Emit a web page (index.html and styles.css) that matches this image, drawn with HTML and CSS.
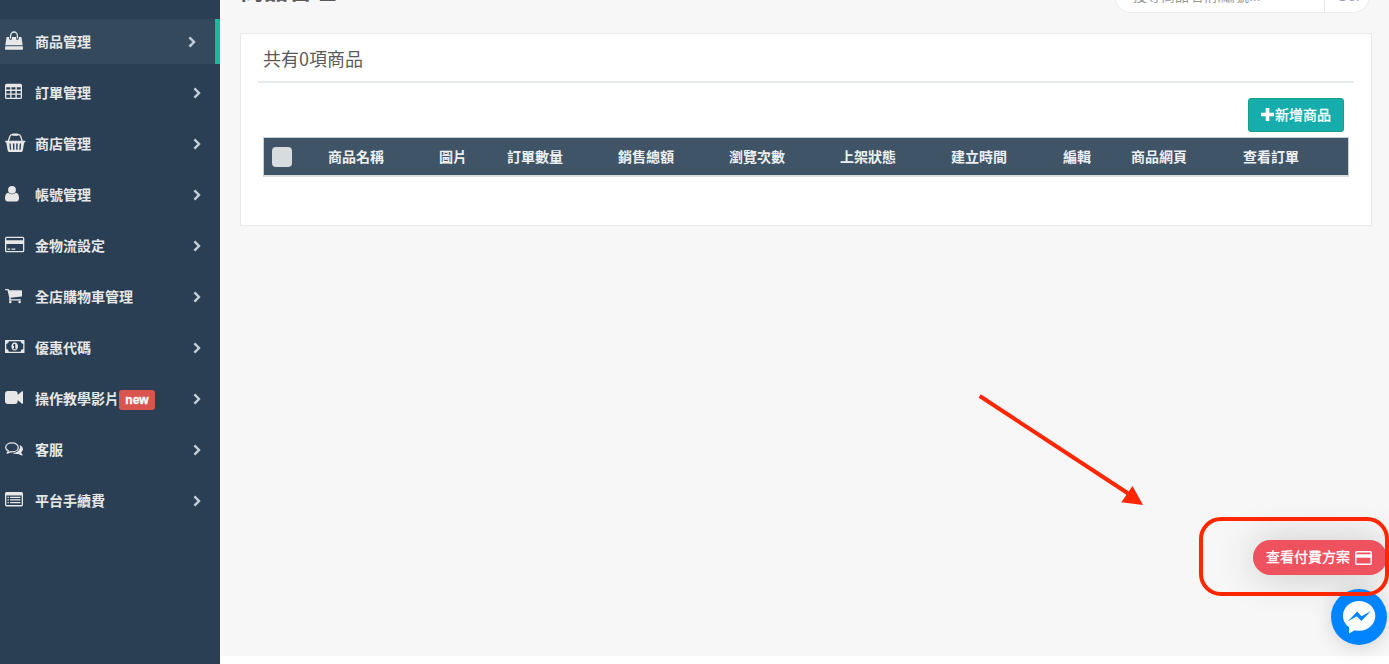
FILE: index.html
```html
<!DOCTYPE html>
<html lang="zh-Hant">
<head>
    <meta charset="UTF-8">
    <meta name="viewport" content="width=device-width, initial-scale=1.0">
    <title>商品管理</title>
    <link rel="stylesheet" href="styles.css">
</head>
<body>

    <svg class="defs" width="0" height="0">
        <symbol id="chevron" viewBox="0 0 8 12">
            <path d="M1.4 1.3 L6 6 L1.4 10.7" fill="none" stroke="#c4cfda" stroke-width="2.4"/>
        </symbol>
    </svg>

    <div class="container">
        <nav class="sidebar">
            <ul class="side-menu">
                <li class="active">
                    <svg class="icon" viewBox="0 0 20 20"><path d="M5.600 8.500V5.700a3.400 3.700 0 0 1 6.800 0V8.500" fill="none" stroke="#e7e7e7" stroke-width="1.300"/><path d="M1.600 7H4.200v1.500a1.400 1.400 0 0 0 2.800 0V7h4v1.500a1.400 1.400 0 0 0 2.800 0V7h2.600L17.700 15.200H.3zM.2 16.200h17.600l.2 2.800q0 .8-.8.800H.8Q0 19.800 0 19z"/></svg>
                    <span class="text">商品管理</span>
                    <svg class="chevron"><use href="#chevron"/></svg>
                </li>
                <li>
                    <svg class="icon" viewBox="0 0 20 20"><path fill-rule="evenodd" d="M1.5 2.700h14q1.500 0 1.500 1.500v12.300q0 1.500-1.500 1.500h-14Q0 18 0 16.500V4.200Q0 2.700 1.500 2.700zM1.300 6.300v2.300h3.900V6.300zm5.200 0v2.300h3.900V6.300zm5.300 0v2.300h3.900V6.300zM1.300 9.900v2.500h3.900V9.900zm5.200 0v2.500h3.900V9.900zm5.300 0v2.500h3.900V9.900zM1.300 13.700v3h3.900v-3zm5.200 0v3h3.900v-3zm5.300 0v3h3.900v-3z"/></svg>
                    <span class="text">訂單管理</span>
                    <svg class="chevron"><use href="#chevron"/></svg>
                </li>
                <li>
                    <svg class="icon icon-wide" viewBox="0 0 21 20"><path d="M3.300 9L5 4Q5.400 2.700 7 2.700h6.500q1.600 0 2 1.300L17.200 9" fill="none" stroke="#e7e7e7" stroke-width="1.300"/><path d="M8 1.400h4.500q.8 0 .8 1v.6q0 .8-.8.800H8q-.8 0-.8-.8v-.6q0-1 .8-1z"/><path fill-rule="evenodd" d="M1 8.700h18.500q1 0 1 .9t-1 .9h-.3L17.800 18.600q-.2 1.300-1.400 1.300H4.100q-1.200 0-1.400-1.300L1.300 10.500H1q-1 0-1-.9t1-.9zM4.400 11.500l.5 6.300h1.300l-.5-6.300zm3.500 0l.2 6.300h1.300v-6.300zm3.300 0v6.300h1.300l.2-6.300zm3.600 0l-.5 6.300h1.300l.5-6.300z"/></svg>
                    <span class="text">商店管理</span>
                    <svg class="chevron"><use href="#chevron"/></svg>
                </li>
                <li>
                    <svg class="icon" viewBox="0 0 20 20"><circle cx="7" cy="6.800" r="3.900"/><path d="M3.300 9.700q1.600 1.600 3.700 1.600t3.700-1.600q3.300.2 3.300 5.600 0 3.100-2.700 3.100H2.700Q0 18.400 0 15.300 0 9.900 3.300 9.700z"/></svg>
                    <span class="text">帳號管理</span>
                    <svg class="chevron"><use href="#chevron"/></svg>
                </li>
                <li>
                    <svg class="icon" viewBox="0 0 20 20"><path fill-rule="evenodd" d="M1.600 2.700h16.100q1.600 0 1.600 1.600v12.400q0 1.600-1.600 1.600H1.600Q0 18.300 0 16.700V4.300Q0 2.700 1.600 2.700zM1.300 4v2.300H18V4zm0 6v7H18v-7zM2.600 14.500h2.500v1.300H2.600zm3.900 0h3.800v1.300H6.500z"/></svg>
                    <span class="text">金物流設定</span>
                    <svg class="chevron"><use href="#chevron"/></svg>
                </li>
                <li>
                    <svg class="icon" viewBox="0 0 20 20"><path d="M.6 4h2.700q.6 0 .8 1.200h12.200q.7 0 .7.700v5q0 .6-.6.700l-10.700 1.200.1 1.400h9.500q.7 0 .7.600t-.7.700H4.700q-.8 0-.8-.7l.5-1.400L2.600 5.300h-2Q0 5.300 0 4.600T.6 4z"/><circle cx="5.300" cy="16.900" r="1.300"/><circle cx="14.600" cy="16.900" r="1.300"/></svg>
                    <span class="text">全店購物車管理</span>
                    <svg class="chevron"><use href="#chevron"/></svg>
                </li>
                <li>
                    <svg class="icon" viewBox="0 0 20 20"><path fill-rule="evenodd" d="M.6 4h18.300q.6 0 .6.600v11.800q0 .6-.6.600H.6Q0 17 0 16.400V4.600Q0 4 .6 4zM3.900 5.300Q3.700 7.700 1.300 7.900v5.200q2.400.2 2.600 2.600h11.700q.2-2.400 2.600-2.600V7.900q-2.400-.2-2.600-2.600z"/><path fill-rule="evenodd" d="M9.700 6.400c2.200 0 3.300 1.900 3.300 4.100s-1.100 4.100-3.300 4.100-3.300-1.900-3.300-4.100 1.100-4.100 3.300-4.100zM9.300 7.900l-1.500 1.200.6.800.6-.4v2.900H8v.9h3.300v-.9h-1V7.900z"/></svg>
                    <span class="text">優惠代碼</span>
                    <svg class="chevron"><use href="#chevron"/></svg>
                </li>
                <li>
                    <svg class="icon" viewBox="0 0 20 20"><path d="M2.900 4h6.900q2.900 0 2.900 2.900v1.200l3.900-3.700q.4-.4.900-.2t.5.600v11.400q0 .4-.5.600t-.9-.2l-3.900-3.700v1.200q0 2.900-2.900 2.900H2.900Q0 17 0 14.100V6.900Q0 4 2.900 4z"/></svg>
                    <span class="text">操作教學影片<span class="label">new</span></span>
                    <svg class="chevron"><use href="#chevron"/></svg>
                </li>
                <li>
                    <svg class="icon" viewBox="0 0 20 20"><path fill="none" stroke="#e7e7e7" stroke-width="1.300" stroke-linejoin="round" d="M7 4.900c3.700 0 6.300 2 6.300 4.500s-2.600 4.500-6.300 4.500q-.9 0-1.700-.2-1.500 1.200-3.200 1.400 1-1 1.200-2.300C1.700 12 .7 10.800.7 9.400c0-2.500 2.600-4.500 6.300-4.500z"/><path d="M14.900 7q3.100 1.500 3.100 4 0 2-1.900 3.300.4 1.400 1.500 2.500.3.500-.3.600-2.100-.2-3.700-1.500-3.700.5-6.300-.9 4 0 6.200-2.300Q15.800 10.200 14.900 7z"/></svg>
                    <span class="text">客服</span>
                    <svg class="chevron"><use href="#chevron"/></svg>
                </li>
                <li>
                    <svg class="icon" viewBox="0 0 20 20"><path fill-rule="evenodd" d="M1.600 3h14.800Q18 3 18 4.600v11.200q0 1.600-1.600 1.600H1.600Q0 17.400 0 15.800V4.600Q0 3 1.600 3zM1.300 6.600v9.500h15.400V6.600z"/><path d="M2.500 7.700h1.400V9H2.500zm2.600 0h10.300V9H5.100zm-2.600 2.600h1.400v1.300H2.500zm2.600 0h10.300v1.300H5.100zm-2.600 2.600h1.400v1.300H2.500zm2.600 0h10.300v1.300H5.100z"/></svg>
                    <span class="text">平台手續費</span>
                    <svg class="chevron"><use href="#chevron"/></svg>
                </li>
            </ul>
        </nav>

        <main class="content">
            <header class="page-title">
                <h3>商品管理</h3>
                <div class="search">
                    <span class="search-input">搜尋商品名稱,編號...</span>
                    <span class="search-button">Go!</span>
                </div>
            </header>

            <section class="panel">
                <h2 class="panel-title">共有0項商品</h2>
                <div class="toolbar">
                    <button class="add-button" type="button"><svg viewBox="0 0 13 13"><path d="M4.700 0h3.600v4.700H13v3.600H8.300V13H4.700V8.300H0V4.700h4.700z" fill="#fff"/></svg><span>新增商品</span></button>
                </div>
                <table class="products">
                    <colgroup>
                        <col class="col-check">
                        <col class="col-name">
                        <col class="col-image">
                        <col class="col-text">
                        <col class="col-text">
                        <col class="col-text">
                        <col class="col-text">
                        <col class="col-time">
                        <col class="col-edit">
                        <col class="col-page">
                        <col>
                    </colgroup>
                    <thead>
                        <tr>
                            <th><span class="checkbox"></span></th>
                            <th>商品名稱</th>
                            <th>圖片</th>
                            <th>訂單數量</th>
                            <th>銷售總額</th>
                            <th>瀏覽次數</th>
                            <th>上架狀態</th>
                            <th>建立時間</th>
                            <th>編輯</th>
                            <th>商品網頁</th>
                            <th>查看訂單</th>
                        </tr>
                    </thead>
                </table>
            </section>
        </main>
    </div>

    <!-- floating buttons -->
    <a class="plan-button"><span>查看付費方案</span><svg viewBox="0 0 17 14"><rect x=".75" y=".75" width="15.500" height="12.500" rx="1" fill="none" stroke="#fff" stroke-width="1.500"/><path d="M1 3.300h15v3.400H1z" fill="#fff"/></svg></a>
    <a class="messenger">
        <svg viewBox="0 0 56 56">
            <path fill="#fff" d="M28 12c9 0 16.300 6.600 16.300 14.900S37 41.800 28 41.800q-2.100 0-4.200-.6L18.100 44.600V38.200C14.400 35.500 12 31.500 12 26.900 12 18.600 19.100 12 28 12z"/>
            <path fill="#0084ff" d="M16.700 32.600l9.500-10 4.300 4.700 9.500-5.300-9.700 10-4.500-4.800z"/>
        </svg>
    </a>

    <!-- arrow and frame pointing at the plan button -->
    <svg class="arrow" viewBox="0 0 170 116">
        <path d="M4.700 6 L154 104" stroke="#ff2600" stroke-width="4" fill="none"/>
        <path d="M168 115 L157.500 96 L146.300 112.300z" fill="#ff2600"/>
    </svg>
    <div class="frame"></div>

</body>
</html>
```
FILE: styles.css
```css
* {
    box-sizing: border-box;
}

body {
    margin: 0;
    height: 664px;
    overflow: hidden;
    position: relative;
    background-color: #fff;
    color: #5a5a5a;
    font-family: "Liberation Sans", "Noto Sans CJK TC", sans-serif;
    font-size: 14px;
}

.defs {
    position: absolute;
}

.container {
    display: flex;
    align-items: flex-start;
}

/* sidebar */
.sidebar {
    width: 220px;
    height: 664px;
    background-color: #2a3f54;
}

.side-menu {
    list-style: none;
    margin: 0;
    padding: 19px 0 0;
    display: flex;
    flex-direction: column;
    gap: 6px;
}

.side-menu li {
    display: flex;
    align-items: center;
    height: 45px;
    padding: 0 19px 0 5px;
    color: #e7e7e7;
    font-weight: bold;
    line-height: 20px;
}

.side-menu .active {
    background-color: #35495d;
    border-right: 5px solid #1abb9c;
}

.icon {
    width: 20px;
    height: 20px;
    margin: 0 10px 3px 0;
    fill: #e7e7e7;
}

.icon-wide {
    width: 21px;
    margin-right: 9px;
}

.text {
    flex: 1;
    display: flex;
    align-items: center;
    white-space: nowrap;
}

.label {
    width: 36px;
    height: 20px;
    margin-top: 2px;
    border-radius: 3px;
    background-color: #d9534f;
    color: #fff;
    font-size: 12px;
    line-height: 20px;
    text-align: center;
    -webkit-text-stroke: 0.3px #fff;
}

.chevron {
    width: 8px;
    height: 12px;
    margin-right: 0.5px;
}

/* main area */
.content {
    flex: 1;
    height: 656px;
    padding: 0 17px 0 20px;
    background-color: #f7f7f7;
}

/* only the bottom edge of the title row is in view */
.page-title {
    display: flex;
    justify-content: space-between;
    align-items: flex-end;
    height: 13px;
    overflow: hidden;
}

.page-title h3 {
    margin: 0 0 10px;
    font-size: 24px;
    font-weight: bold;
    line-height: 24px;
}

.search {
    display: flex;
    width: 256px;
    height: 34px;
    margin-right: 2px;
    border: 1px solid #e9edf0;
    border-radius: 17px;
    background-color: #fff;
    line-height: 32px;
}

.search-input {
    flex: 1;
    padding-left: 18px;
    color: #999;
}

.search-button {
    width: 45px;
    padding-left: 12px;
    border-left: 1px solid #e6e9ed;
    color: #93a2b2;
}

.panel {
    height: 193px;
    margin-top: 20px;
    padding: 0 17px;
    border: 1px solid #e6e9ed;
    background-color: #fff;
}

.panel-title {
    height: 49px;
    margin: 0;
    padding: 10px 5px 0;
    border-bottom: 2px solid #e6e9ed;
    font-family: "Noto Sans CJK TC", sans-serif;
    font-size: 18px;
    font-weight: normal;
    line-height: 28px;
}

.toolbar {
    display: flex;
    justify-content: flex-end;
    padding: 15px 10px 5px 0;
}

.add-button {
    display: flex;
    align-items: center;
    gap: 1px;
    width: 96px;
    height: 34px;
    padding: 0 12px;
    border: 1px solid #169f85;
    border-radius: 3px;
    background-color: #17adad;
    color: #fff;
    font-family: inherit;
    font-size: 14px;
    white-space: nowrap;
    -webkit-text-stroke: 0.3px #fff;
}

.add-button span {
    margin-bottom: 2px;
}

.add-button svg {
    width: 13px;
    height: 13px;
    margin-bottom: 1px;
    flex: none;
}

.products {
    width: 1086px;
    margin-left: 5px;
    table-layout: fixed;
    border: 1px solid #c8ced4;
    border-bottom: 2px solid #ddd;
    border-spacing: 0;
    background-color: #405467;
    color: #ecf0f1;
}

.products th {
    height: 37px;
    padding: 0 0 0 8px;
    text-align: left;
    line-height: 20px;
}

.col-check { width: 56px; }
.col-name { width: 111px; }
.col-image { width: 68px; }
.col-text { width: 111px; }
.col-time { width: 112px; }
.col-edit { width: 68px; }
.col-page { width: 112px; }

.checkbox {
    display: block;
    width: 20px;
    height: 20px;
    border-radius: 4px;
    background-color: #d7dcde;
}

/* floating buttons */
.plan-button {
    position: absolute;
    left: 1253px;
    top: 540px;
    display: flex;
    align-items: center;
    gap: 5px;
    width: 134px;
    height: 35px;
    padding-left: 13px;
    border-radius: 18px;
    background-color: #ef525f;
    box-shadow: 0 1px 40px rgba(0, 0, 0, 0.2);
    color: #fff;
    white-space: nowrap;
    -webkit-text-stroke: 0.3px #fff;
}

.plan-button span {
    margin-bottom: 3px;
}

.plan-button svg {
    width: 17px;
    height: 14px;
    margin-top: 1px;
}

.messenger {
    position: absolute;
    left: 1331px;
    top: 589px;
    width: 56px;
    height: 56px;
    border-radius: 50%;
    background-color: #0084ff;
    box-shadow: 0 2px 20px rgba(0, 0, 0, 0.15);
}

.arrow {
    position: absolute;
    left: 975px;
    top: 390px;
    width: 170px;
    height: 116px;
}

.frame {
    position: absolute;
    left: 1199px;
    top: 517px;
    width: 190px;
    height: 79px;
    border: 4px solid #ff2600;
    border-radius: 22px;
}
```
